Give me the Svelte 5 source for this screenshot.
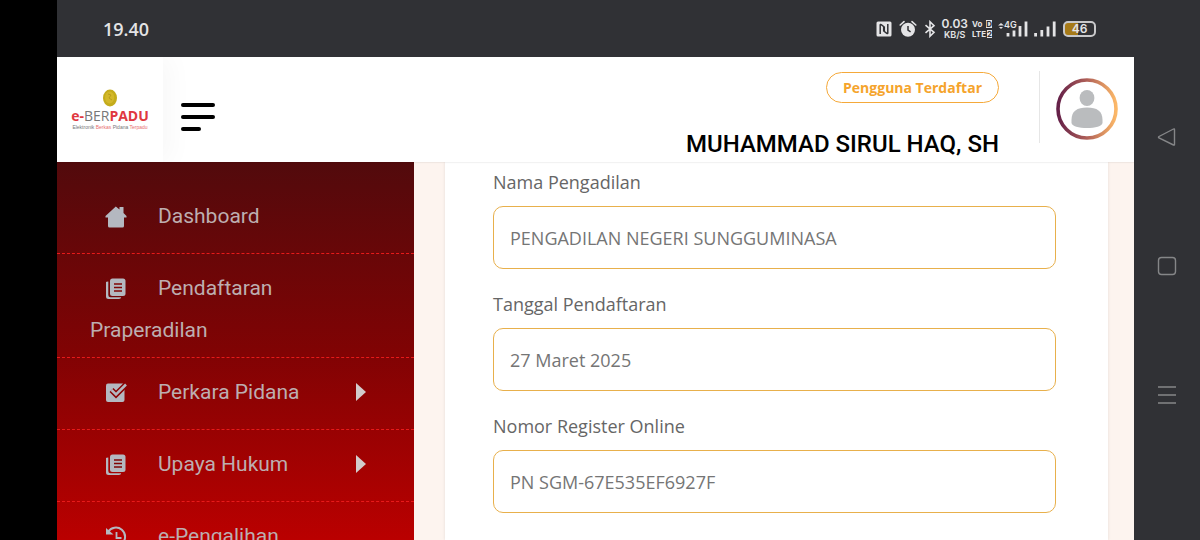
<script lang="ts">
  type MenuItem = { label: string; icon: string; sub?: boolean };

  const menu: MenuItem[] = [
    { label: 'Dashboard', icon: 'home' },
    { label: 'Pendaftaran Praperadilan', icon: 'docs' },
    { label: 'Perkara Pidana', icon: 'check', sub: true },
    { label: 'Upaya Hukum', icon: 'docs', sub: true },
    { label: 'e-Pengalihan', icon: 'history' },
  ];

  let fields = $state([
    { id: 'court', label: 'Nama Pengadilan', value: 'PENGADILAN NEGERI SUNGGUMINASA' },
    { id: 'date', label: 'Tanggal Pendaftaran', value: '27 Maret 2025' },
    { id: 'register', label: 'Nomor Register Online', value: 'PN SGM-67E535EF6927F' },
  ]);
</script>

<div class="device">
  <div class="screen">
    <div class="status">
      <span class="clock">19.40</span>
      <div class="status-icons">
        <svg width="16" height="16" viewBox="0 0 16 16" aria-label="NFC">
          <rect x="0.5" y="0.5" width="15" height="15" rx="1.5" fill="#e4e4e6" />
          <path d="M4.2 13V4Q4.2 3 5.2 3.6L8.3 6V10.5M7.7 5.5V10L10.8 12.4Q11.8 13 11.8 12V3" fill="none" stroke="#303135" stroke-width="1.5" />
        </svg>
        <svg class="alarm" width="18" height="18" viewBox="0 0 18 18" aria-label="Alarm">
          <circle cx="9" cy="9.8" r="7" fill="#e4e4e6" />
          <path d="M1.2 5L5 1.6M16.8 5L13 1.6" stroke="#e4e4e6" stroke-width="1.6" stroke-linecap="round" />
          <path d="M9 6v4.2l2.6 1.6" fill="none" stroke="#303135" stroke-width="1.5" />
        </svg>
        <svg class="bluetooth" width="12" height="18" viewBox="0 0 12 18" aria-label="Bluetooth">
          <path d="M1.5 5.2L10 12.3L6 16.2V1.8L10 5.7L1.5 12.8" fill="none" stroke="#e4e4e6" stroke-width="1.6" />
        </svg>
        <div class="speed"><b>0.03</b><small>KB/S</small></div>
        <div class="volte"><span>Vo<i>D</i></span><span>LTE<i>2</i></span></div>
        <div class="network">
          <svg width="30" height="18" viewBox="0 0 30 18" aria-label="Signal 1">
            <path d="M0 5.5l3-2.6 3 2.6zM1 7l2 2 2-2z" fill="#e4e4e6" />
            <path d="M10 13v3.5M16 10.5v6M22 6v10.5M28 1.5v15" stroke="#e4e4e6" stroke-width="2.8" />
          </svg>
          <span class="gen">4G</span>
        </div>
        <svg class="signal" width="22" height="18" viewBox="0 0 22 18" aria-label="Signal 2">
          <path d="M1.6 13v3.5M7.8 10v6.5M14 6.5v10M20.2 1.5v15" stroke="#e4e4e6" stroke-width="2.8" />
        </svg>
        <div class="battery"><span>46</span></div>
      </div>
    </div>

    <header>
      <a class="logo" href="#home" aria-label="e-Berpadu">
        <svg width="16" height="18" viewBox="0 0 16 18">
          <ellipse cx="8" cy="9" rx="7" ry="8.4" fill="#c4ac1c" />
          <ellipse cx="7.6" cy="8.4" rx="4.6" ry="6" fill="#d3b82a" />
          <path d="M6 5l3 1-2 3 3 2" fill="none" stroke="#b89e1c" stroke-width="1" />
        </svg>
        <span class="brand"><b>e-</b>BER<b>PADU</b></span>
        <span class="tagline">Elektronik <em>Berkas</em> Pidana <em>Terpadu</em></span>
      </a>
      <button class="burger" aria-label="Menu">
        <span></span><span></span><span class="short"></span>
      </button>
      <div class="user">
        <span class="badge">Pengguna Terdaftar</span>
        <span class="name">MUHAMMAD SIRUL HAQ, SH</span>
      </div>
      <button class="avatar" aria-label="Profil">
        <svg width="62" height="62" viewBox="0 0 62 62">
          <defs>
            <linearGradient id="ring" x1="0" x2="1" y1="0" y2="0">
              <stop offset="0" stop-color="#642048" />
              <stop offset="0.5" stop-color="#b06058" />
              <stop offset="1" stop-color="#fcb868" />
            </linearGradient>
          </defs>
          <circle cx="31" cy="31" r="29" fill="#fff" stroke="url(#ring)" stroke-width="3.6" />
          <ellipse cx="31" cy="20" rx="7.4" ry="8" fill="#babcbe" />
          <path d="M15.5 42C15.5 33 21 29.5 31 29.5S46.5 33 46.5 42V44.5C46.5 48.5 39 50 31 50S15.5 48.5 15.5 44.5z" fill="#babcbe" />
        </svg>
      </button>
    </header>

    <div class="body">
      <nav class="sidebar">
        {#each menu as item}
          <a class="item" href="#menu">
            <span class="icon">
              <svg width="22" height="22" viewBox="0 0 22 22">
                {#if item.icon === 'home'}
                  <path d="M10.8 0.5L14.5 3.5V1H18.5V7L21.5 10V11.5H19V20Q19 21.5 17.5 21.5H4.5Q3 21.5 3 20V11.5H0.5V10z" fill="currentColor" />
                {:else if item.icon === 'docs'}
                  <path d="M1 4v14.500Q1 21 3.5 21H14Q16 21 16.2 19.2H5.5Q3.3 19.2 3.3 17V3.5Q1 3.5 1 4z" fill="currentColor" />
                  <rect x="5" y="0.5" width="15.5" height="17.5" rx="2.5" fill="currentColor" />
                  <path d="M9 6h8M9 9.5h8M9 13h8" stroke="#800404" stroke-width="1.3" />
                {:else if item.icon === 'check'}
                  <rect x="1" y="1.5" width="18.5" height="18.5" rx="2" fill="currentColor" />
                  <path d="M6.5 8L11 12.5L21 2.5" fill="none" stroke="#8c0404" stroke-width="5.5" />
                  <path d="M6.5 8L11 12.5L21 2.5" fill="none" stroke="currentColor" stroke-width="2.5" />
                {:else}
                  <path d="M3 6A9.2 9.2 0 1 1 3 15.5" fill="none" stroke="currentColor" stroke-width="2" />
                  <path d="M1 2v6.5H8.5z" fill="currentColor" />
                  <path d="M11.5 6v6h5" fill="none" stroke="currentColor" stroke-width="1.8" />
                {/if}
              </svg>
            </span>{item.label}
            {#if item.sub}
              <svg class="caret" width="10" height="18" viewBox="0 0 10 18"><path d="M0 0L10 9L0 18z" fill="#d2cccc" /></svg>
            {/if}
          </a>
        {/each}
      </nav>

      <main>
        <form class="card">
          {#each fields as field}
            <div class="field">
              <label for={field.id}>{field.label}</label>
              <input id={field.id} type="text" bind:value={field.value} />
            </div>
          {/each}
        </form>
      </main>
    </div>
  </div>

  <div class="softkeys">
    <button aria-label="Back">
      <svg width="20" height="20" viewBox="0 0 20 20"><path d="M17.5 2.5V17.5Q17.5 18.5 16.5 18L2 11Q1 10.2 2 9.5L16.5 2Q17.5 1.5 17.5 2.5z" /></svg>
    </button>
    <button aria-label="Home">
      <svg width="20" height="20" viewBox="0 0 20 20"><rect x="1.5" y="1.5" width="17" height="17" rx="3" /></svg>
    </button>
    <button aria-label="Recent apps">
      <svg width="20" height="20" viewBox="0 0 20 20"><path d="M1 2h18M1 10h18M1 18h18" /></svg>
    </button>
  </div>
</div>

<style>
  :global(body) { margin: 0; background: #000; }
  .device { display: flex; height: 100vh; padding-left: 57px; box-sizing: border-box; overflow: hidden; font-family: Roboto, "Liberation Sans", sans-serif; }
  .screen { flex: 1; min-width: 0; display: flex; flex-direction: column; }
  button { background: none; border: none; padding: 0; cursor: pointer; }
  svg { display: block; flex: none; }
  a { text-decoration: none; }

  .status { flex: none; height: 57px; display: flex; align-items: center; justify-content: space-between; padding: 0 38px 0 46px; box-sizing: border-box; background: #303135; color: #e4e4e6; }
  .clock { font: 600 18px "Open Sans", sans-serif; }
  .status-icons { display: flex; align-items: center; }
  .alarm { margin-left: 7px; }
  .bluetooth { margin-left: 7px; }
  .speed { display: flex; flex-direction: column; align-items: center; margin-left: 5px; }
  .speed b { font: 600 12px/12px Inter, sans-serif; }
  .speed small { font: 600 9px/10px Inter, sans-serif; }
  .volte { display: flex; flex-direction: column; margin-left: 4px; font: 700 8px/10px Inter, sans-serif; }
  .volte span { display: flex; align-items: center; justify-content: space-between; width: 20px; }
  .volte i { font-style: normal; line-height: 8px; background: #e4e4e6; color: #303135; }
  .network { position: relative; margin-left: 6px; }
  .gen { position: absolute; left: 6px; top: 0; background: #303135; font: 600 9px/9px Inter, sans-serif; }
  .signal { margin-left: 6px; }
  .battery { display: flex; width: 33px; height: 16px; margin-left: 7px; box-sizing: border-box; border: 2px solid #c8c8ca; border-radius: 5px; background: linear-gradient(90deg, #a67a18 46%, #303135 46%); font: 600 12px/12px Inter, sans-serif; }
  .battery span { flex: 1; text-align: center; }

  header { flex: none; height: 105px; display: flex; align-items: center; padding-right: 16px; background: #fff; box-shadow: 0 1px 1px #0000000d; z-index: 1; }
  .logo { width: 106px; height: 105px; display: flex; flex-direction: column; align-items: center; justify-content: center; background: #fff; box-shadow: 8px 0 24px #00000008; clip-path: inset(0 -40px 0 0); }
  .brand { font: 14px/17px "Open Sans", sans-serif; color: #777; }
  .brand b { color: #e03840; }
  .tagline { font: 5px/6px "Liberation Sans", sans-serif; color: #777; white-space: nowrap; }
  .tagline em { font-style: normal; color: #e87070; }
  .burger { display: flex; flex-direction: column; gap: 8px; width: 34px; margin: 14px 0 0 18px; }
  .burger span { height: 4px; border-radius: 2px; background: #000; }
  .burger .short { width: 20px; }
  .user { display: flex; flex-direction: column; align-items: flex-end; gap: 25px; margin-left: auto; padding: 12px 40px 0 0; }
  .badge { padding: 0 16px; border: 1px solid #f5a93a; border-radius: 16px; font: 700 14px/29px "Open Sans", sans-serif; color: #f5a42c; }
  .name { font-weight: 500; font-size: 24px; line-height: 32px; color: #000; white-space: nowrap; }
  .avatar { margin-bottom: 5px; padding: 7px 0 3px 16px; border-left: 1px solid #e6e6e6; }

  .body { flex: 1; min-height: 0; display: flex; overflow: hidden; }
  .sidebar { flex: none; width: 357px; padding-top: 20px; box-sizing: border-box; overflow: hidden; background: linear-gradient(#520a0c, #800304 50%, #ba0000); }
  .item { display: block; position: relative; padding: 10px 36px 11px 33px; border-bottom: 1px dashed #e81a1a; font-size: 21px; line-height: 32px; color: #bdaeb0; }
  .icon { display: inline-flex; align-items: center; width: 53px; height: 50px; padding-left: 15px; vertical-align: middle; color: #b4b8c0; }
  .caret { position: absolute; right: 48px; top: 25px; }

  main { flex: 1; min-width: 0; padding: 0 26px 0 31px; background: #fdf4ef; }
  .card { display: flex; flex-direction: column; gap: 22px; height: 100%; padding: 7px 52px 0 48px; box-sizing: border-box; background: #fff; box-shadow: 0 0 3px #0000001a; }
  .field { display: flex; flex-direction: column; gap: 11px; font-family: "Open Sans", sans-serif; }
  label { font-size: 18px; line-height: 26px; color: #666; }
  input { width: 100%; height: 63px; box-sizing: border-box; padding: 0 16px; border: 1px solid #e8b04c; border-radius: 10px; background: #fff; font-family: inherit; font-size: 18px; color: #757575; outline: none; }

  .softkeys { flex: none; width: 66px; display: flex; flex-direction: column; align-items: center; justify-content: center; gap: 109px; padding-bottom: 8px; box-sizing: border-box; background: #303135; }
  .softkeys svg { fill: none; stroke: #858688; stroke-width: 1.4; }
</style>
